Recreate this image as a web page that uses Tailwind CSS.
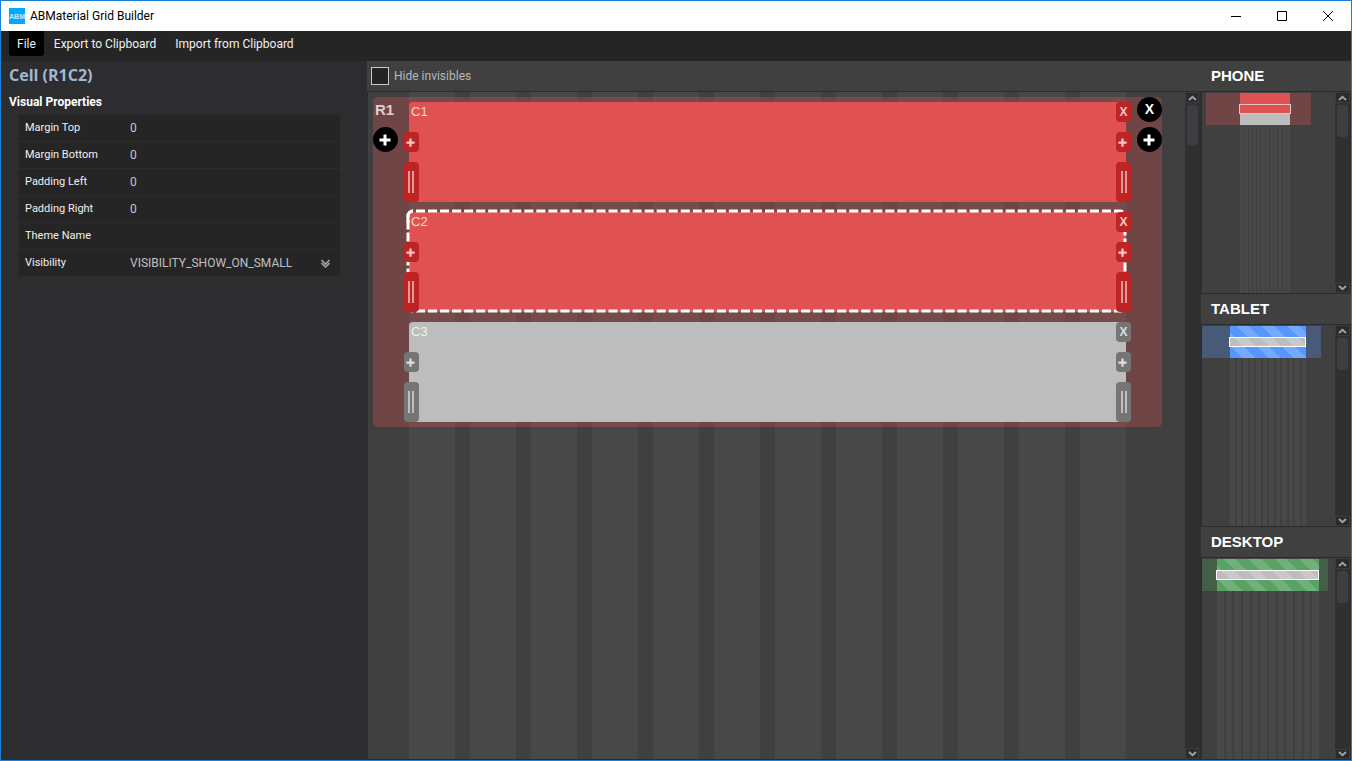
<!DOCTYPE html>
<html lang="en">
<head>
<meta charset="utf-8">
<title>ABMaterial Grid Builder</title>
<script src="https://cdn.jsdelivr.net/npm/@tailwindcss/browser@4"></script>
</head>
<body class="h-screen overflow-hidden font-['Roboto','Noto_Sans',sans-serif]">
<svg class="hidden">
  <symbol id="up" viewBox="0 0 9 6"><path d="M1 5 4.5 1.8 8 5" fill="none" stroke="#a0a0a0" stroke-width="2"/></symbol>
  <symbol id="down" viewBox="0 0 9 6"><path d="M1 1 4.5 4.2 8 1" fill="none" stroke="#a0a0a0" stroke-width="2"/></symbol>
  <symbol id="plus" viewBox="0 0 12 12"><path d="M6 .5v11M.5 6h11" stroke="currentColor" stroke-width="3"/></symbol>
  <symbol id="grip" viewBox="0 0 6 22"><path d="M1 0v22M5 0v22" stroke="currentColor" stroke-width="1.4"/></symbol>
</svg>
<div class="flex h-full flex-col border border-[#1a80d8] bg-[#2d2d30]">
  <header class="flex h-[30px] shrink-0 items-center bg-white pl-2 text-black">
    <svg class="h-4 w-4" viewBox="0 0 16 16"><rect width="16" height="16" fill="#03a9f4"/><text x="8" y="11" text-anchor="middle" font-family="Liberation Sans" font-size="7" font-weight="bold" fill="#c4ebfc">ABM</text></svg>
    <h1 class="ml-[5px] flex-1 text-[12px]">ABMaterial Grid Builder</h1>
    <button class="flex h-full w-[46px] items-center justify-center" aria-label="Minimize"><svg width="10" height="10"><path d="M0 5.500h10" stroke="#000"/></svg></button>
    <button class="flex h-full w-[46px] items-center justify-center" aria-label="Maximize"><svg width="10" height="10"><path d="M.5.500h9v9h-9z" fill="none" stroke="#000"/></svg></button>
    <button class="flex h-full w-[46px] items-center justify-center" aria-label="Close"><svg width="10" height="10"><path d="M0 0l10 10M10 0L0 10" stroke="#000"/></svg></button>
  </header>
  <nav class="flex h-[30px] shrink-0 items-start bg-[#252525] pl-2 text-[12px] text-[#f0f0f0]">
    <button class="h-[25px] rounded-b-[3px] bg-black px-2">File</button>
    <button class="ml-[10px] h-[25px]">Export to Clipboard</button>
    <button class="ml-[19px] h-[25px]">Import from Clipboard</button>
  </nav>
  <div class="flex min-h-0 flex-1">
    <aside class="w-[366px] shrink-0 pl-2">
      <h2 class="pt-1 font-['Open_Sans','Noto_Sans',sans-serif] text-[16px] leading-5 font-bold text-[#a0b8d0]">Cell (R1C2)</h2>
      <h3 class="mt-2 text-[12px] leading-[18px] font-bold text-white">Visual Properties</h3>
      <div class="mt-1 mr-[27px] ml-[10px] divide-y divide-[#2d2d30] bg-[#252526] text-[11px] text-[#f0f0f0]">
        <div class="flex h-[27px] items-center pl-[6px]"><label for="mt" class="w-[105px] shrink-0">Margin Top</label><input id="mt" value="0" class="min-w-0 flex-1 bg-transparent text-[12px] text-[#c8c8c8]"></div>
        <div class="flex h-[27px] items-center pl-[6px]"><label for="mb" class="w-[105px] shrink-0">Margin Bottom</label><input id="mb" value="0" class="min-w-0 flex-1 bg-transparent text-[12px] text-[#c8c8c8]"></div>
        <div class="flex h-[27px] items-center pl-[6px]"><label for="pl" class="w-[105px] shrink-0">Padding Left</label><input id="pl" value="0" class="min-w-0 flex-1 bg-transparent text-[12px] text-[#c8c8c8]"></div>
        <div class="flex h-[27px] items-center pl-[6px]"><label for="pr" class="w-[105px] shrink-0">Padding Right</label><input id="pr" value="0" class="min-w-0 flex-1 bg-transparent text-[12px] text-[#c8c8c8]"></div>
        <div class="flex h-[27px] items-center pl-[6px]"><label for="tn" class="w-[105px] shrink-0">Theme Name</label><input id="tn" value="" class="min-w-0 flex-1 bg-transparent text-[12px] text-[#c8c8c8]"></div>
        <div class="flex h-[26px] items-center pr-[10px] pl-[6px]"><label for="vis" class="w-[105px] shrink-0">Visibility</label><select id="vis" class="min-w-0 flex-1 appearance-none bg-transparent text-[12px] text-[#c0c0c0]"><option>VISIBILITY_SHOW_ON_SMALL</option></select><svg width="9" height="9" class="shrink-0"><path d="M.5 1 4.500 5 8.500 1M.5 4 4.500 8 8.500 4" fill="none" stroke="#a0a0a0" stroke-width="1.600"/></svg></div>
      </div>
    </aside>

    <main class="flex min-w-0 flex-1 flex-col">
      <div class="flex h-[31px] shrink-0 items-center border-b border-[#2b2b2b] bg-[#404040] pl-1">
        <input id="hide" type="checkbox" class="h-[18px] w-[18px] appearance-none border border-[#c8c8c8] bg-[#252525]">
        <label for="hide" class="ml-[5px] text-[12px] text-[#b8b8b8]">Hide invisibles</label>
      </div>
      <div class="flex min-h-0 flex-1 border-b border-l border-[#2b2b2b]">
        <div class="grid min-w-0 flex-1 bg-[#404040]">
          <div class="col-start-1 row-start-1 grid grid-cols-12 gap-[15px] pr-[59px] pl-[41px]">
            <i class="bg-[#484848]"></i><i class="bg-[#484848]"></i><i class="bg-[#484848]"></i><i class="bg-[#484848]"></i><i class="bg-[#484848]"></i><i class="bg-[#484848]"></i><i class="bg-[#484848]"></i><i class="bg-[#484848]"></i><i class="bg-[#484848]"></i><i class="bg-[#484848]"></i><i class="bg-[#484848]"></i><i class="bg-[#484848]"></i>
          </div>
          <section class="z-10 col-start-1 row-start-1 mt-[5px] mr-[23px] ml-[5px] flex self-start rounded-[5px] bg-[#e05252]/30 font-['Liberation_Sans',Arial,sans-serif]">
            <div class="w-9 shrink-0">
              <div class="h-[30px] pl-[2px] text-[15px] leading-[26px] font-bold text-[#dccfcf]">R1</div>
              <button class="flex h-[25px] w-[25px] items-center justify-center rounded-full bg-black pr-px text-white" aria-label="Add row below"><svg class="h-3 w-3"><use href="#plus"/></svg></button>
            </div>
            <div class="flex min-w-0 flex-1 flex-col gap-[10px] py-[5px]">
              <div class="relative h-[100px] rounded-t-[4px] bg-[#e05252] pt-[2px] pl-[2px] text-[13px] leading-4 text-[#f4d6d6]">C1
                <button class="absolute top-[30px] -left-[5px] flex h-5 w-[15px] items-center justify-center rounded-[4px] bg-[#bf2424] pr-[2px] text-[#f0caca]" aria-label="Add cell before"><svg class="h-[9px] w-[9px]"><use href="#plus"/></svg></button>
                <button class="absolute top-[60px] -left-[5px] flex h-10 w-[15px] items-center justify-center rounded-[4px] bg-[#bf2424] pr-px text-[#f0caca]" aria-label="Resize left"><svg class="h-[22px] w-[6px]"><use href="#grip"/></svg></button>
                <button class="absolute top-0 -right-[5px] h-5 w-[15px] rounded-[4px] bg-[#bf2424] text-[12px] leading-5 font-bold text-[#f0caca]">X</button>
                <button class="absolute top-[30px] -right-[5px] flex h-5 w-[15px] items-center justify-center rounded-[4px] bg-[#bf2424] pr-[2px] text-[#f0caca]" aria-label="Add cell after"><svg class="h-[9px] w-[9px]"><use href="#plus"/></svg></button>
                <button class="absolute top-[60px] -right-[5px] flex h-10 w-[15px] items-center justify-center rounded-[4px] bg-[#bf2424] pl-px text-[#f0caca]" aria-label="Resize right"><svg class="h-[22px] w-[6px]"><use href="#grip"/></svg></button>
              </div>
              <div class="relative h-[100px] rounded-t-[4px] bg-[#e05252] pt-[2px] pl-[2px] text-[13px] leading-4 text-[#f4d6d6]">C2
                <svg class="absolute inset-0 h-full w-full overflow-visible"><rect x="-1" y="-1" width="100%" height="100%" rx="5" fill="none" stroke="#fff" stroke-width="3" stroke-dasharray="9 3" stroke-dashoffset="9" pathLength="1620"/><path d="M-1 11V4a5 5 0 0 1 5-5" fill="none" stroke="#fff" stroke-width="3"/></svg>
                <button class="absolute top-[30px] -left-[5px] flex h-5 w-[15px] items-center justify-center rounded-[4px] bg-[#bf2424] pr-[2px] text-[#f0caca]" aria-label="Add cell before"><svg class="h-[9px] w-[9px]"><use href="#plus"/></svg></button>
                <button class="absolute top-[60px] -left-[5px] flex h-10 w-[15px] items-center justify-center rounded-[4px] bg-[#bf2424] pr-px text-[#f0caca]" aria-label="Resize left"><svg class="h-[22px] w-[6px]"><use href="#grip"/></svg></button>
                <button class="absolute top-0 -right-[5px] h-5 w-[15px] rounded-[4px] bg-[#bf2424] text-[12px] leading-5 font-bold text-[#f0caca]">X</button>
                <button class="absolute top-[30px] -right-[5px] flex h-5 w-[15px] items-center justify-center rounded-[4px] bg-[#bf2424] pr-[2px] text-[#f0caca]" aria-label="Add cell after"><svg class="h-[9px] w-[9px]"><use href="#plus"/></svg></button>
                <button class="absolute top-[60px] -right-[5px] flex h-10 w-[15px] items-center justify-center rounded-[4px] bg-[#bf2424] pl-px text-[#f0caca]" aria-label="Resize right"><svg class="h-[22px] w-[6px]"><use href="#grip"/></svg></button>
              </div>
              <div class="relative h-[100px] rounded-t-[4px] bg-[#bdbdbd] pt-[2px] pl-[2px] text-[13px] leading-4 text-[#f0f0f0]">C3
                <button class="absolute top-[30px] -left-[5px] flex h-5 w-[15px] items-center justify-center rounded-[4px] bg-[#757575] pr-[2px] text-[#dedede]" aria-label="Add cell before"><svg class="h-[9px] w-[9px]"><use href="#plus"/></svg></button>
                <button class="absolute top-[60px] -left-[5px] flex h-10 w-[15px] items-center justify-center rounded-[4px] bg-[#757575] pr-px text-[#dedede]" aria-label="Resize left"><svg class="h-[22px] w-[6px]"><use href="#grip"/></svg></button>
                <button class="absolute top-0 -right-[5px] h-5 w-[15px] rounded-[4px] bg-[#757575] text-[12px] leading-5 font-bold text-[#dedede]">X</button>
                <button class="absolute top-[30px] -right-[5px] flex h-5 w-[15px] items-center justify-center rounded-[4px] bg-[#757575] pr-[2px] text-[#dedede]" aria-label="Add cell after"><svg class="h-[9px] w-[9px]"><use href="#plus"/></svg></button>
                <button class="absolute top-[60px] -right-[5px] flex h-10 w-[15px] items-center justify-center rounded-[4px] bg-[#757575] pl-px text-[#dedede]" aria-label="Resize right"><svg class="h-[22px] w-[6px]"><use href="#grip"/></svg></button>
              </div>
            </div>
            <div class="flex w-9 shrink-0 flex-col items-end gap-[5px]">
              <button class="h-[25px] w-[25px] rounded-full bg-black text-[14px] leading-[25px] font-bold text-white">X</button>
              <button class="flex h-[25px] w-[25px] items-center justify-center rounded-full bg-black pr-[2px] text-white" aria-label="Add row"><svg class="h-3 w-3"><use href="#plus"/></svg></button>
            </div>
          </section>
        </div>
        <div class="flex w-[14px] shrink-0 flex-col bg-[#303032]">
          <button class="flex h-[11px] items-center justify-center border border-[#3c3c3e] bg-[#2b2b2d]" aria-label="Scroll up"><svg class="h-[6px] w-[9px]"><use href="#up"/></svg></button>
          <div class="flex-1 pt-[2px] pr-px pl-[2px]"><div class="h-10 rounded-[3px] bg-[#3e3e42]"></div></div>
          <button class="flex h-[11px] items-center justify-center border border-[#3c3c3e] bg-[#2b2b2d]" aria-label="Scroll down"><svg class="h-[6px] w-[9px]"><use href="#down"/></svg></button>
        </div>
        <div class="w-[2px] shrink-0 bg-[#303032]"></div>
      </div>
    </main>

    <aside class="flex w-[150px] shrink-0 flex-col">
      <h2 class="h-[31px] shrink-0 border-b border-[#2b2b2b] bg-[#404040] pl-[10px] font-['Liberation_Sans',Arial,sans-serif] text-[15px] leading-[30px] font-bold text-white">PHONE</h2>
      <div class="flex min-h-0 flex-1 border-x border-[#2b2b2b]">
        <div class="grid min-w-0 flex-1 grid-rows-1 bg-[#404040]">
          <div class="col-start-1 row-start-1 mr-[45px] ml-[38px] grid grid-cols-12 gap-px">
            <i class="bg-[#484848]"></i><i class="bg-[#484848]"></i><i class="bg-[#484848]"></i><i class="bg-[#484848]"></i><i class="bg-[#484848]"></i><i class="bg-[#484848]"></i><i class="bg-[#484848]"></i><i class="bg-[#484848]"></i><i class="bg-[#484848]"></i><i class="bg-[#484848]"></i><i class="bg-[#484848]"></i><i class="bg-[#484848]"></i>
          </div>
          <div class="z-10 col-start-1 row-start-1 mt-px mr-6 ml-1 h-8 self-start bg-[#6f4545] pr-[21px] pl-[34px]">
            <div class="h-[11px] bg-[#e05252]"></div>
            <div class="-mx-px h-[10px] border border-[#e8c4c4] bg-[#e05252]"></div>
            <div class="h-[11px] bg-[#bdbdbd]"></div>
          </div>
        </div>
        <div class="flex w-[15px] shrink-0 flex-col bg-[#303032]">
          <button class="flex h-[11px] items-center justify-center border border-[#3c3c3e] bg-[#2b2b2d]" aria-label="Scroll up"><svg class="h-[6px] w-[9px]"><use href="#up"/></svg></button>
          <div class="flex-1 px-[2px] pt-[2px]"><div class="h-8 rounded-[3px] bg-[#3e3e42]"></div></div>
          <button class="flex h-[10px] items-center justify-center border border-[#3c3c3e] bg-[#2b2b2d]" aria-label="Scroll down"><svg class="h-[6px] w-[9px]"><use href="#down"/></svg></button>
        </div>
      </div>
      <h2 class="h-8 shrink-0 border-y border-[#2b2b2b] bg-[#404040] pl-[10px] font-['Liberation_Sans',Arial,sans-serif] text-[15px] leading-[30px] font-bold text-white">TABLET</h2>
      <div class="flex min-h-0 flex-1 border-x border-[#2b2b2b]">
        <div class="grid min-w-0 flex-1 grid-rows-1 bg-[#404040]">
          <div class="col-start-1 row-start-1 mr-[29px] ml-7 grid grid-cols-12 gap-[2px]">
            <i class="bg-[#484848]"></i><i class="bg-[#484848]"></i><i class="bg-[#484848]"></i><i class="bg-[#484848]"></i><i class="bg-[#484848]"></i><i class="bg-[#484848]"></i><i class="bg-[#484848]"></i><i class="bg-[#484848]"></i><i class="bg-[#484848]"></i><i class="bg-[#484848]"></i><i class="bg-[#484848]"></i><i class="bg-[#484848]"></i>
          </div>
          <div class="z-10 col-start-1 row-start-1 mt-px mr-[14px] h-8 self-start bg-[#475a78] pr-[15px] pl-7">
            <div class="h-full bg-[repeating-linear-gradient(45deg,#5596ff_0_9px,#73a9ff_9px_18px)] pt-[11px]">
              <div class="-ml-px h-[10px] border border-white bg-[repeating-linear-gradient(45deg,#bdbdbd_0_9px,#c9c9c9_9px_18px)]"></div>
            </div>
          </div>
        </div>
        <div class="flex w-[15px] shrink-0 flex-col bg-[#303032]">
          <button class="flex h-[11px] items-center justify-center border border-[#3c3c3e] bg-[#2b2b2d]" aria-label="Scroll up"><svg class="h-[6px] w-[9px]"><use href="#up"/></svg></button>
          <div class="flex-1 px-[2px] pt-[2px]"><div class="h-8 rounded-[3px] bg-[#3e3e42]"></div></div>
          <button class="flex h-[10px] items-center justify-center border border-[#3c3c3e] bg-[#2b2b2d]" aria-label="Scroll down"><svg class="h-[6px] w-[9px]"><use href="#down"/></svg></button>
        </div>
      </div>
      <h2 class="h-8 shrink-0 border-y border-[#2b2b2b] bg-[#404040] pl-[10px] font-['Liberation_Sans',Arial,sans-serif] text-[15px] leading-[30px] font-bold text-white">DESKTOP</h2>
      <div class="flex min-h-0 flex-1 border-x border-b border-[#2b2b2b]">
        <div class="grid min-w-0 flex-1 grid-rows-1 bg-[#404040]">
          <div class="col-start-1 row-start-1 mr-4 ml-[15px] grid grid-cols-12 gap-[2px]">
            <i class="bg-[#484848]"></i><i class="bg-[#484848]"></i><i class="bg-[#484848]"></i><i class="bg-[#484848]"></i><i class="bg-[#484848]"></i><i class="bg-[#484848]"></i><i class="bg-[#484848]"></i><i class="bg-[#484848]"></i><i class="bg-[#484848]"></i><i class="bg-[#484848]"></i><i class="bg-[#484848]"></i><i class="bg-[#484848]"></i>
          </div>
          <div class="z-10 col-start-1 row-start-1 mt-px mr-[7px] h-8 self-start bg-[#455e48] pr-[9px] pl-[15px]">
            <div class="h-full bg-[repeating-linear-gradient(45deg,#58a364_0_9px,#72b07b_9px_18px)] pt-[11px]">
              <div class="-ml-px h-[10px] border border-white bg-[repeating-linear-gradient(45deg,#bdbdbd_0_9px,#c9c9c9_9px_18px)]"></div>
            </div>
          </div>
        </div>
        <div class="flex w-[15px] shrink-0 flex-col bg-[#303032]">
          <button class="flex h-[11px] items-center justify-center border border-[#3c3c3e] bg-[#2b2b2d]" aria-label="Scroll up"><svg class="h-[6px] w-[9px]"><use href="#up"/></svg></button>
          <div class="flex-1 px-[2px] pt-[2px]"><div class="h-8 rounded-[3px] bg-[#3e3e42]"></div></div>
          <button class="flex h-[10px] items-center justify-center border border-[#3c3c3e] bg-[#2b2b2d]" aria-label="Scroll down"><svg class="h-[6px] w-[9px]"><use href="#down"/></svg></button>
        </div>
      </div>
    </aside>
  </div>
</div>
</body>
</html>
